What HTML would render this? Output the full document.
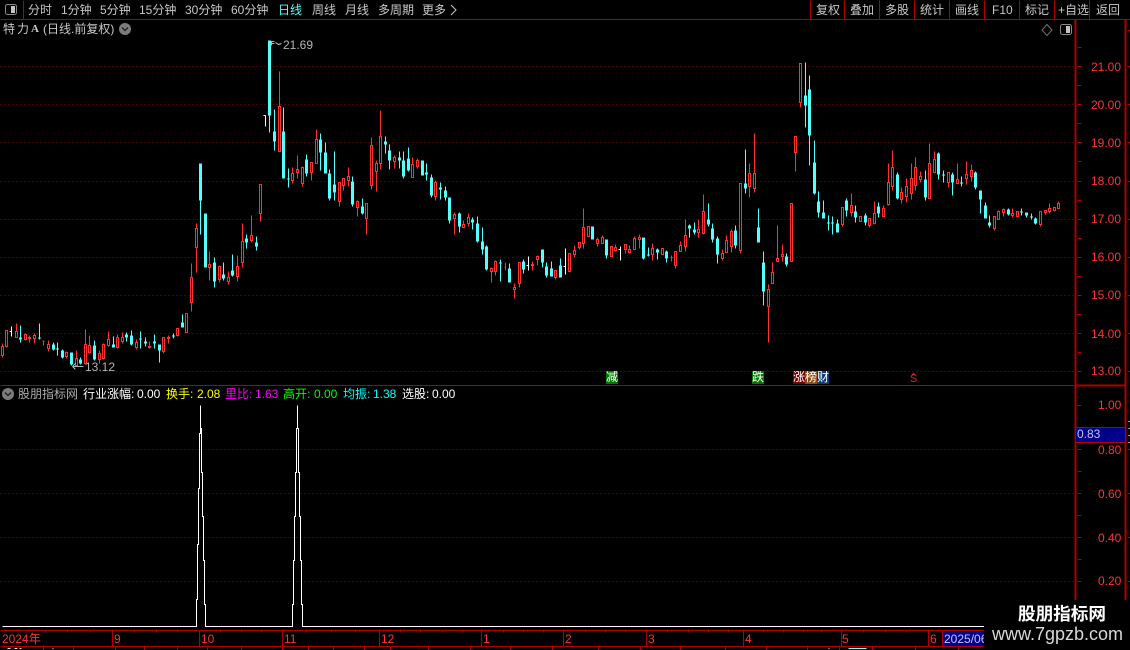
<!DOCTYPE html>
<html lang="zh"><head><meta charset="utf-8"><title>特力A 日线</title>
<style>
html,body{margin:0;padding:0;background:#000;width:1130px;height:650px;overflow:hidden}
body{position:relative;font-family:"Liberation Sans","Noto Sans CJK SC",sans-serif;font-size:12px;color:#c8c8c8}
.t{position:absolute;white-space:nowrap;line-height:14px;height:14px}
.r{color:#ff3232}
svg{position:absolute;left:0;top:0}
.m{position:absolute;top:371px;width:12px;height:13px;line-height:13px;text-align:center;color:#fff;font-size:12px;overflow:hidden}
</style></head><body>
<svg width="1130" height="650" viewBox="0 0 1130 650" shape-rendering="crispEdges" fill="none">
<g transform="translate(.5 .5)">
<!-- grid -->
<path stroke="#a00000" stroke-dasharray="1 3" d="M0 66H1075M0 104H1075M0 142H1075M0 181H1075M0 219H1075M0 257H1075M0 295H1075M0 333H1075M0 371H1075M0 449H1075M0 493H1075M0 537H1075M0 581H1075"/>
<!-- frame -->
<path stroke="#b00000" d="M0 19H1130M23 0V19M810 0V19M844 0V19M879 0V19M914 0V19M949 0V19M984 0V19M1019 0V19M1054 0V19M1089 0V19M0 385H1075M0 630H1075M0 646H1130"/>
<path stroke="#b00000" stroke-width="2" d="M1075 19V600M1125 19V600M1076 385H1125"/>
<path stroke="#b00000" d="M1077 47H1081M1077 66H1081M1077 85H1081M1077 104H1081M1077 123H1081M1077 142H1081M1077 161H1081M1077 181H1081M1077 200H1081M1077 219H1081M1077 238H1081M1077 257H1081M1077 276H1081M1077 295H1081M1077 314H1081M1077 333H1081M1077 352H1081M1077 371H1081M1077 405H1081M1077 449H1081M1077 471H1081M1077 493H1081M1077 515H1081M1077 537H1081M1077 559H1081M1077 581H1081M1127 30H1130M1127 66H1130M1127 104H1130M1127 142H1130M1127 181H1130M1127 219H1130M1127 257H1130M1127 295H1130M1127 333H1130M1127 371H1130M1127 449H1130M1127 493H1130M1127 537H1130M1127 581H1130"/>
<path stroke="#ddd" d="M1128 421H1130M1128 428H1130M1128 435H1130M1128 442H1130"/>
<!-- bottom axis -->
<path stroke="#b00000" d="M112 630V646M199 630V646M282 630V646M379 630V646M481 630V646M563 630V646M646 630V646M743 630V646M841 630V646M928 630V646M942 630V646M45 630V632M67 630V632M90 630V632M134 630V632M156 630V632M177 630V632M220 630V632M241 630V632M261 630V632M306 630V632M331 630V632M355 630V632M400 630V632M420 630V632M442 630V632M462 630V632M503 630V632M523 630V632M543 630V632M585 630V632M605 630V632M625 630V632M667 630V632M688 630V632M708 630V632M728 630V632M763 630V632M783 630V632M803 630V632M821 630V632M863 630V632M885 630V632M906 630V632M43 646V650M73 646V650M115 646V650M144 646V650M177 646V650M207 646V650M241 646V650M282 646V650M308 646V650M333 646V650M364 646V650M390 646V650M428 646V650M470 646V650M510 646V650M552 646V650M598 646V650M640 646V650M680 646V650M725 646V650M766 646V650M807 646V650M839 646V650M872 646V650M915 646V650M958 646V650"/>
<path stroke="#ddd" d="M7 648H10M14 648H17M19 648H21M52 648H53M828 648H829"/>
<path stroke="#7fe" d="M848 648H866"/>
<!-- red candles wicks -->
<path stroke="#ff3232" d="M2 343V357M6 330V347M16 323V337M25 333V340M29 335V342M34 333V343M43 340V345M48 340V351M66 351V358M76 350V366M85 329V364M89 335V353M99 350V363M103 343V359M108 331V346M117 334V348M122 332V343M136 339V349M149 341V348M163 337V353M168 335V343M177 328V336M186 313V332M191 263V311M196 223V272M209 251V280M219 265V282M228 271V284M237 255V281M242 223V267M251 215V242M260 184V221M279 71V151M292 167V183M297 155V178M302 166V186M311 162V180M316 129V163M339 182V206M343 178V190M348 167V186M357 200V216M366 203V234M371 137V189M376 160V191M380 110V169M394 155V168M412 157V177M417 158V168M435 180V200M454 212V234M463 220V227M468 213V226M491 267V282M495 260V275M505 262V270M514 283V298M519 262V287M532 261V270M537 255V265M555 270V279M569 253V271M574 245V257M579 242V249M583 208V248M588 226V236M597 237V246M602 235V243M611 246V256M615 244V251M625 244V253M629 245V253M634 236V249M639 234V248M652 243V260M662 248V254M671 255V261M675 251V268M680 241V251M685 219V251M698 219V237M703 194V234M722 249V260M726 235V252M731 229V252M740 183V253M749 163V197M754 133V192M768 284V342M772 262V283M777 225V261M782 244V261M791 203V261M795 136V171M800 63V107M842 207V226M851 193V216M860 216V221M869 218V227M874 201V224M883 205V216M888 163V205M892 150V190M901 187V203M906 178V202M911 163V199M915 157V190M920 171V182M929 143V198M934 151V172M948 172V187M957 163V183M966 161V184M971 164V181M994 216V230M998 210V219M1003 208V216M1012 208V217M1017 211V217M1040 211V226M1045 210V214M1049 203V213M1054 207V211M1058 201V208"/>
<path stroke="#ff3232" d="M42 341H44M504 267H505M670 257H672"/>
<!-- red candle bodies -->
<path stroke="#ff3232" fill="#000" d="M1 346h2V355h-2zM5 330h2V346h-2zM15 331h2V337h-2zM24 334h2V339h-2zM28 337h2V338h-2zM33 335h2V338h-2zM47 344h2V348h-2zM65 352h2V356h-2zM75 358h2V365h-2zM84 344h2V363h-2zM88 345h2V352h-2zM98 353h2V359h-2zM102 344h2V358h-2zM107 339h2V345h-2zM116 337h2V347h-2zM121 337h2V341h-2zM135 342h2V347h-2zM148 346h2V347h-2zM162 337h2V351h-2zM167 337h2V338h-2zM176 328h2V335h-2zM185 313h2V332h-2zM190 277h2V302h-2zM195 228h2V247h-2zM208 264h2V267h-2zM218 266h2V279h-2zM227 277h2V281h-2zM236 266h2V276h-2zM241 241h2V262h-2zM250 235h2V240h-2zM259 184h2V213h-2zM278 106h2V151h-2zM291 173h2V180h-2zM296 169h2V172h-2zM301 167h2V183h-2zM310 162h2V172h-2zM315 139h2V163h-2zM338 182h2V201h-2zM342 178h2V185h-2zM347 176h2V180h-2zM356 201h2V207h-2zM365 203h2V218h-2zM370 145h2V185h-2zM375 163h2V171h-2zM379 136h2V163h-2zM393 157h2V161h-2zM411 164h2V177h-2zM416 160h2V166h-2zM434 182h2V196h-2zM453 214h2V218h-2zM462 224h2V227h-2zM467 217h2V223h-2zM490 268h2V271h-2zM494 261h2V271h-2zM513 287h2V289h-2zM518 262h2V283h-2zM531 264h2V265h-2zM536 256h2V259h-2zM554 270h2V277h-2zM568 253h2V271h-2zM573 250h2V254h-2zM578 242h2V247h-2zM582 227h2V243h-2zM587 226h2V236h-2zM596 239h2V243h-2zM601 237h2V243h-2zM610 246h2V256h-2zM614 247h2V250h-2zM624 244h2V249h-2zM628 249h2V252h-2zM633 238h2V249h-2zM638 237h2V239h-2zM651 248h2V254h-2zM661 248h2V254h-2zM674 251h2V265h-2zM679 245h2V251h-2zM684 235h2V246h-2zM697 229h2V232h-2zM702 211h2V233h-2zM721 253h2V258h-2zM725 240h2V252h-2zM730 231h2V246h-2zM739 183h2V250h-2zM748 173h2V186h-2zM753 173h2V188h-2zM767 289h2V306h-2zM771 272h2V283h-2zM776 258h2V261h-2zM781 254h2V256h-2zM790 203h2V261h-2zM794 136h2V152h-2zM799 63h2V102h-2zM841 207h2V224h-2zM850 205h2V212h-2zM859 216h2V221h-2zM868 218h2V225h-2zM873 213h2V223h-2zM882 208h2V216h-2zM887 182h2V204h-2zM891 167h2V186h-2zM900 192h2V199h-2zM905 186h2V196h-2zM910 178h2V193h-2zM914 167h2V185h-2zM919 176h2V179h-2zM928 163h2V198h-2zM933 159h2V172h-2zM947 172h2V182h-2zM956 179h2V183h-2zM965 174h2V178h-2zM970 170h2V176h-2zM993 216h2V228h-2zM997 211h2V219h-2zM1002 209h2V212h-2zM1011 213h2V215h-2zM1016 211h2V216h-2zM1039 211h2V224h-2zM1044 210h2V212h-2zM1048 208h2V211h-2zM1053 207h2V210h-2zM1057 203h2V208h-2z"/>
<!-- cyan wicks -->
<path stroke="#54ffff" d="M20 325V342M39 323V339M53 342V350M57 342V355M62 349V358M71 352V365M80 357V364M94 340V360M113 336V347M126 332V341M131 330V345M140 331V348M145 337V346M154 334V348M159 344V362M173 333V338M182 314V327M200 163V234M214 257V287M223 262V280M232 254V276M246 234V248M256 236V250M269 40V132M274 109V150M283 107V178M288 168V187M306 154V176M320 133V170M325 142V173M329 169V200M334 151V200M352 176V206M362 198V214M385 136V153M389 144V169M399 151V168M403 151V178M408 147V171M426 163V180M431 174V197M440 182V199M445 186V200M449 197V223M459 212V232M472 217V229M477 216V242M482 227V254M486 245V270M500 259V281M509 263V282M523 259V273M542 249V267M546 262V277M551 261V276M560 258V277M606 239V258M643 237V259M648 247V256M657 248V259M666 250V262M689 224V237M694 222V234M708 203V226M712 223V242M717 236V263M735 225V248M745 149V193M758 208V242M763 251V305M786 253V266M805 62V127M809 75V165M814 140V194M818 191V217M823 200V218M828 215V230M832 216V234M837 219V232M846 198V216M855 205V222M865 213V225M878 202V217M897 172V199M925 170V200M938 152V179M943 170V182M952 172V195M961 176V186M975 171V189M980 190V213M985 202V218M989 215V227M1008 208V215M1021 208V215M1026 212V217M1031 213V219M1035 217V224"/>
<!-- cyan bodies -->
<path stroke="#54ffff" stroke-width="3" d="M20 337V339M39 337V338M53 344V349M57 348V349M62 350V357M71 352V364M80 359V363M94 345V359M113 344V347M126 334V337M131 335V344M140 338V339M145 341V343M154 341V343M159 344V350M173 335V336M182 322V327M200 163V200M205 213V267M214 262V281M223 274V278M232 270V275M246 238V242M256 242V246M269 40V115M274 131V141M283 131V178M288 178V179M306 159V173M320 139V152M325 152V173M329 173V198M334 184V192M352 181V204M362 206V213M385 141V144M389 150V160M399 157V160M403 160V176M408 158V170M422 160V175M426 172V174M431 177V195M440 187V189M445 190V197M449 197V220M459 213V226M472 219V222M477 223V241M482 241V249M486 246V269M500 262V263M509 268V282M523 261V269M542 249V262M546 266V275M551 268V276M560 265V277M592 226V239M606 239V255M643 237V258M648 254V255M657 249V252M666 251V258M689 225V228M694 229V232M708 219V224M712 228V239M717 238V254M735 230V245M745 183V188M758 227V242M763 262V291M786 256V264M805 95V105M809 89V135M814 162V193M818 201V212M823 212V218M828 222V223M832 222V223M837 223V232M846 200V210M855 211V217M865 215V222M878 206V213M897 174V198M925 179V197M938 153V174M943 174V175M952 174V182M961 182V183M975 172V187M980 190V199M985 205V218M989 222V225M1008 209V214M1021 211V212M1026 212V215M1031 216V217M1035 218V223"/>
<!-- white dojis -->
<path stroke="#fff" d="M11 326V336M9 331H11M265 115V126M263 115H265M528 256V270M526 265H528M565 248V274M563 266H565M620 246V260M618 249H620"/>
<!-- indicator line -->
<path stroke="#fff" d="M2 626H196V599H197V544H198V488H199V433H200V405V428H201V472H202V516H203V560H204V604H205V626H292V604H293V560H294V516H295V472H296V428H297V405V428H298V472H299V516H300V560H301V604H302V626H984"/>
<!-- hi/lo arrows -->
<path stroke="#b4b4b4" d="M271 45V41H274M271 43H274M275 42L278 44L281 43M72 366H83M72 366L75 363M72 366L75 369"/>
<!-- S mark -->
<path stroke="#e02020" d="M911 375L913 373L915 375"/>
</g>
<!-- icons -->
<g shape-rendering="auto">
<rect x="5.5" y="4.5" width="11" height="10" rx="2" stroke="#8a8a8a"/><rect x="11" y="6" width="4" height="7" fill="#c4c4c4"/>
<rect x="1060.5" y="24.5" width="11" height="10" rx="2" stroke="#8a8a8a"/><rect x="1066" y="26" width="4" height="7" fill="#c4c4c4"/>
<path d="M1047 24.5L1052 30L1047 35.5L1042 30Z" stroke="#707070"/>
<circle cx="125" cy="29" r="6" fill="#7c7c7c"/><path d="M122 27.5L125 30.5L128 27.5" stroke="#222" stroke-width="1.4"/>
<circle cx="8" cy="394" r="6" fill="#7c7c7c"/><path d="M5 392.5L8 395.5L11 392.5" stroke="#222" stroke-width="1.4"/>
<path d="M451 5L456 10L451 15" stroke="#c8c8c8"/>
</g>
</svg>
<!-- toolbar -->
<span class="t" style="left:28px;top:3px">分时</span>
<span class="t" style="left:61px;top:3px">1分钟</span>
<span class="t" style="left:100px;top:3px">5分钟</span>
<span class="t" style="left:139px;top:3px">15分钟</span>
<span class="t" style="left:185px;top:3px">30分钟</span>
<span class="t" style="left:231px;top:3px">60分钟</span>
<span class="t" style="left:278px;top:3px;color:#54ffff">日线</span>
<span class="t" style="left:312px;top:3px">周线</span>
<span class="t" style="left:345px;top:3px">月线</span>
<span class="t" style="left:378px;top:3px">多周期</span>
<span class="t" style="left:422px;top:3px">更多</span>
<span class="t" style="left:816px;top:3px">复权</span>
<span class="t" style="left:850px;top:3px">叠加</span>
<span class="t" style="left:885px;top:3px">多股</span>
<span class="t" style="left:920px;top:3px">统计</span>
<span class="t" style="left:955px;top:3px">画线</span>
<span class="t" style="left:992px;top:3px">F10</span>
<span class="t" style="left:1025px;top:3px">标记</span>
<span class="t" style="left:1058px;top:3px">+自选</span>
<span class="t" style="left:1096px;top:3px">返回</span>
<!-- title -->
<span class="t" style="left:3px;top:22px">特</span>
<span class="t" style="left:17px;top:22px">力</span>
<span class="t" style="left:31px;top:22px;font-family:'Liberation Serif',serif;font-weight:bold;font-size:11px">A</span>
<span class="t" style="left:43px;top:22px">(日线.前复权)</span>
<!-- hi/lo labels -->
<span class="t" style="left:283px;top:38px;color:#b4b4b4">21.69</span>
<span class="t" style="left:85px;top:360px;color:#b4b4b4">13.12</span>
<!-- right axis -->
<span class="t r" style="left:1091px;top:60px">21.00</span>
<span class="t r" style="left:1091px;top:98px">20.00</span>
<span class="t r" style="left:1091px;top:136px">19.00</span>
<span class="t r" style="left:1091px;top:174px">18.00</span>
<span class="t r" style="left:1091px;top:212px">17.00</span>
<span class="t r" style="left:1091px;top:250px">16.00</span>
<span class="t r" style="left:1091px;top:288px">15.00</span>
<span class="t r" style="left:1091px;top:327px">14.00</span>
<span class="t r" style="left:1091px;top:364px">13.00</span>
<span class="t r" style="left:1098px;top:398px">1.00</span>
<div style="position:absolute;left:1076px;top:427px;width:49px;height:14px;background:#00008b;border-top:1px solid #b00000;border-bottom:1px solid #b00000"></div>
<span class="t" style="left:1077px;top:427px;color:#c4c4ff">0.83</span>
<span class="t r" style="left:1098px;top:443px">0.80</span>
<span class="t r" style="left:1098px;top:487px">0.60</span>
<span class="t r" style="left:1098px;top:531px">0.40</span>
<span class="t r" style="left:1098px;top:574px">0.20</span>
<!-- markers -->
<div class="m" style="left:606px;background:#007a00">减</div>
<div class="m" style="left:752px;background:#007a00">跌</div>
<div class="m" style="left:793px;background:#7a0000">涨</div>
<div class="m" style="left:805px;background:#8a4a10">榜</div>
<div class="m" style="left:817px;background:#0a3a78">财</div>
<span class="t" style="left:910px;top:374px;color:#e02020;font-size:11px;line-height:11px;height:11px">S</span>
<!-- indicator header -->
<span class="t" style="left:18px;top:387px;color:#aaa">股朋指标网</span>
<span class="t" style="left:83px;top:387px;color:#fff">行业涨幅:</span>
<span class="t" style="left:137px;top:387px;color:#fff">0.00</span>
<span class="t" style="left:166px;top:387px;color:#ff0">换手:</span>
<span class="t" style="left:197px;top:387px;color:#ff0">2.08</span>
<span class="t" style="left:225px;top:387px;color:#f0f">里比:</span>
<span class="t" style="left:255px;top:387px;color:#f0f">1.63</span>
<span class="t" style="left:283px;top:387px;color:#0f0">高开:</span>
<span class="t" style="left:314px;top:387px;color:#0f0">0.00</span>
<span class="t" style="left:343px;top:387px;color:#0ff">均振:</span>
<span class="t" style="left:373px;top:387px;color:#0ff">1.38</span>
<span class="t" style="left:402px;top:387px;color:#fff">选股:</span>
<span class="t" style="left:432px;top:387px;color:#fff">0.00</span>
<!-- dates -->
<span class="t r" style="left:2px;top:632px">2024年</span>
<span class="t r" style="left:114px;top:632px">9</span>
<span class="t r" style="left:201px;top:632px">10</span>
<span class="t r" style="left:284px;top:632px">11</span>
<span class="t r" style="left:381px;top:632px">12</span>
<span class="t r" style="left:483px;top:632px">1</span>
<span class="t r" style="left:565px;top:632px">2</span>
<span class="t r" style="left:648px;top:632px">3</span>
<span class="t r" style="left:745px;top:632px">4</span>
<span class="t r" style="left:842px;top:632px">5</span>
<span class="t r" style="left:930px;top:632px">6</span>
<div style="position:absolute;left:943px;top:631px;width:41px;height:15px;background:#00008b"></div>
<span class="t" style="left:944px;top:632px;color:#c4c4ff">2025/06</span>
<!-- watermark -->
<div style="position:absolute;left:984px;top:600px;width:146px;height:50px;background:#000"></div>
<span class="t" style="left:1018px;top:604px;height:20px;line-height:20px;font-size:17.6px;font-weight:bold;color:#fff">股朋指标网</span>
<span class="t" style="left:992px;top:624px;height:20px;line-height:20px;font-size:18px;color:#d8d8d8">www.7gpzb.com</span>
</body></html>
